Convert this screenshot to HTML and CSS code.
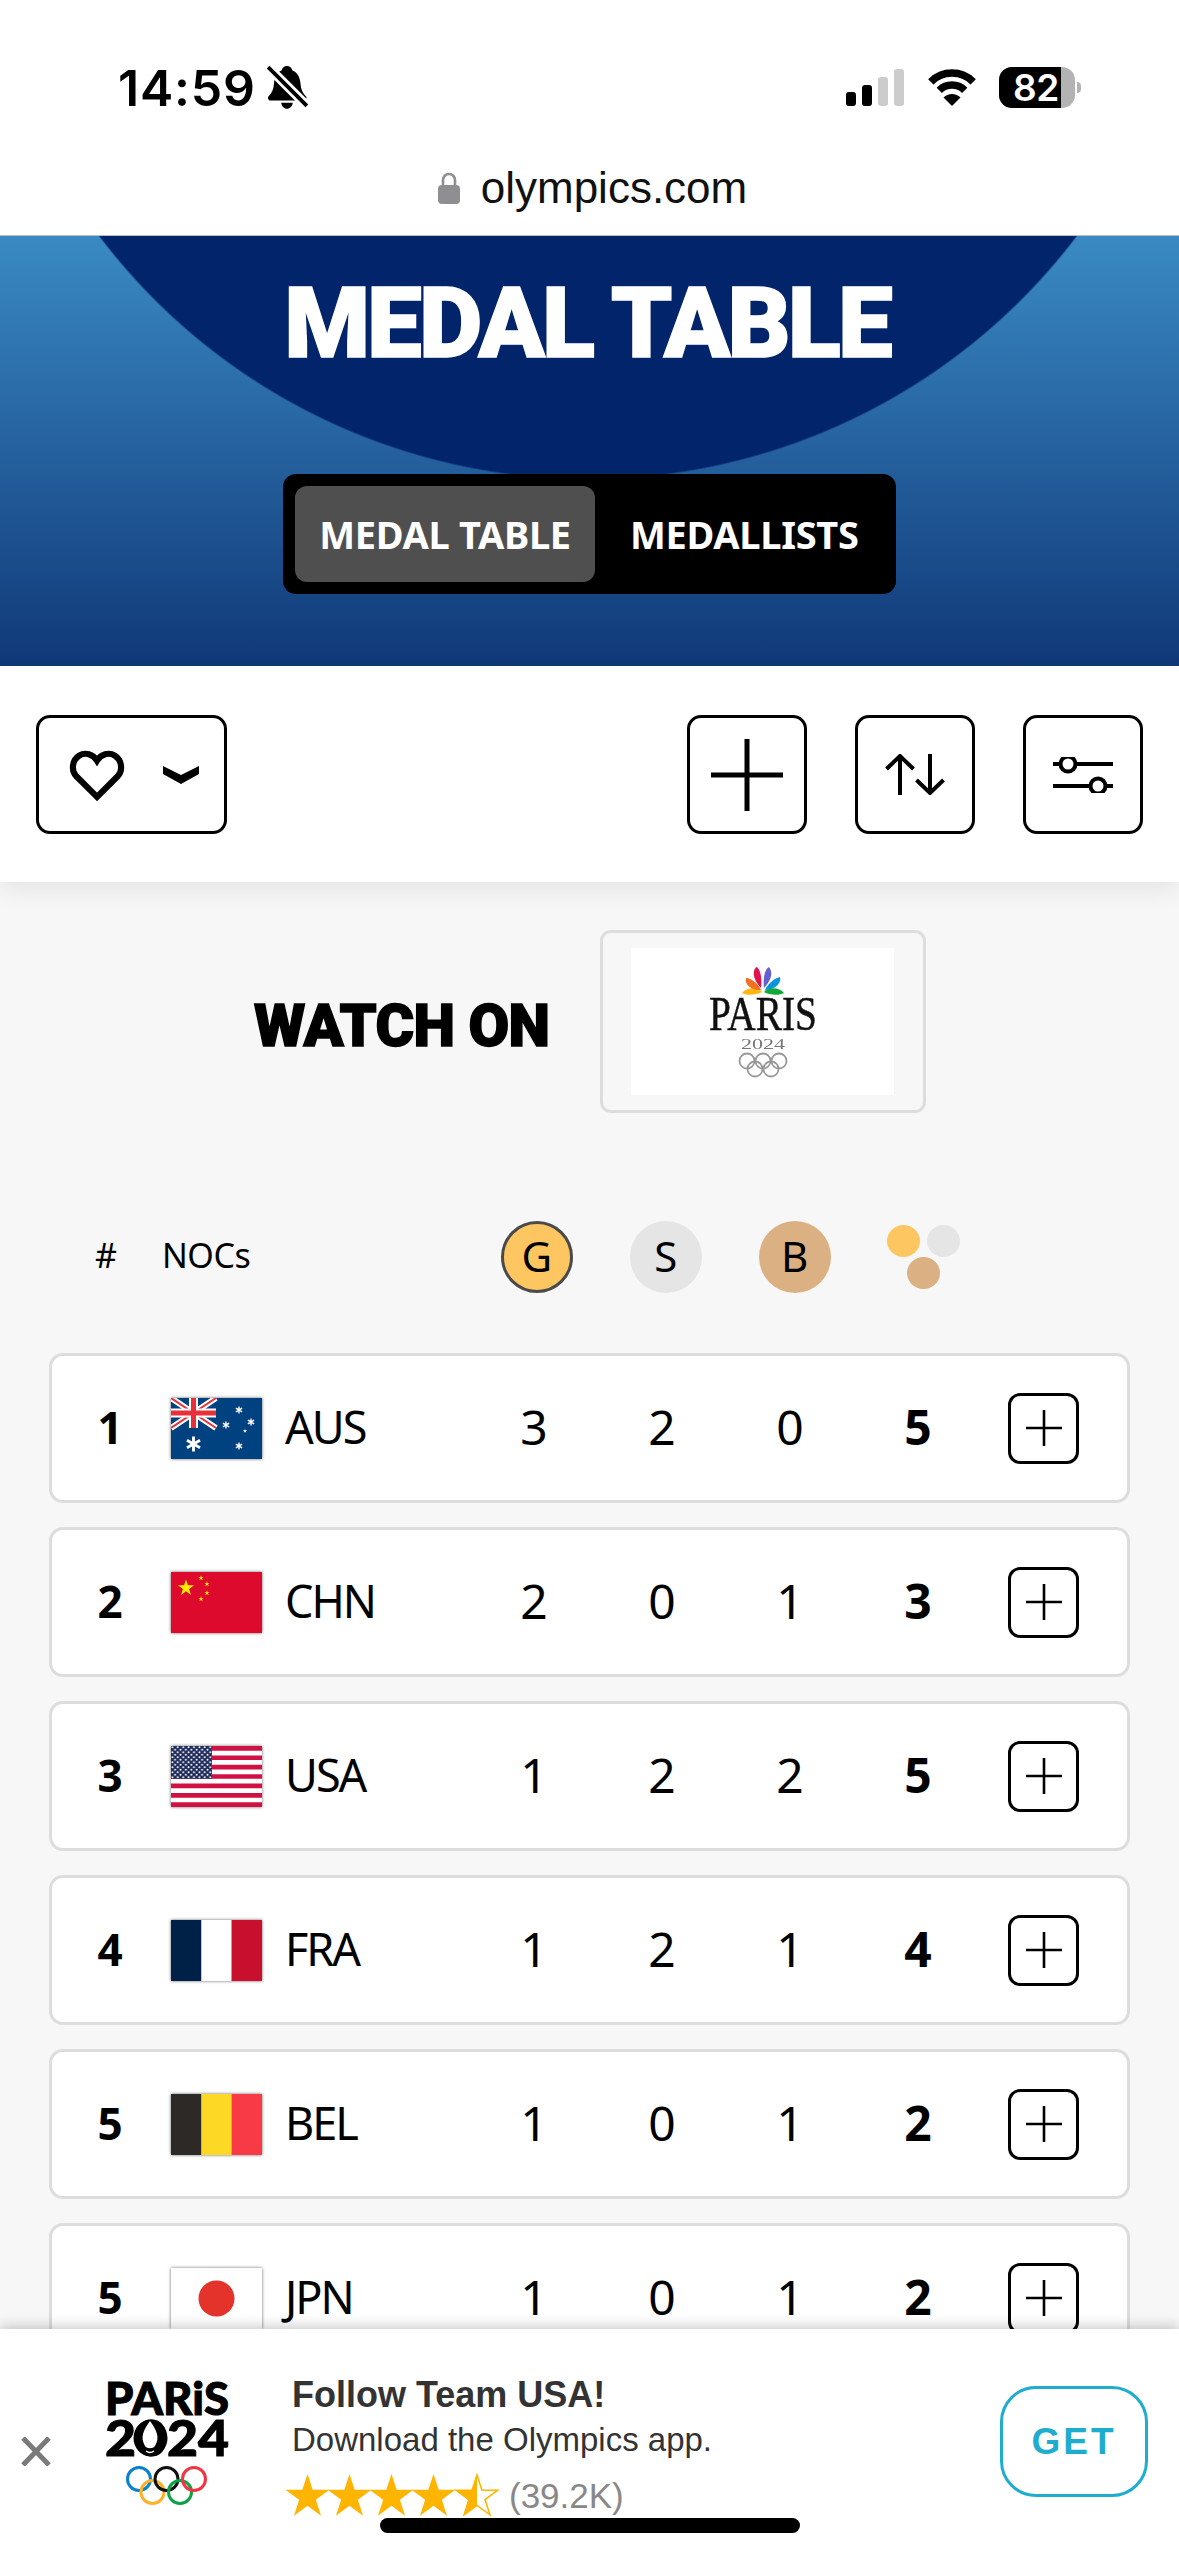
FILE: index.html
```html
<!DOCTYPE html>
<html lang="en">
<head>
    <meta charset="UTF-8">
    <title>Medal Table</title>
    <link rel="stylesheet" href="styles.css">
</head>
<body>
    <svg class="defs" width="0" height="0" aria-hidden="true">
        <defs>
            <polygon id="star" points="0,-1 .225,-.31 .95,-.31 .363,.118 .588,.81 0,.382 -.588,.81 -.363,.118 -.95,-.31 -.225,-.31"/>
            <path id="spark" d="M0-1V1M-.87-.5 .87.5M-.87.5 .87-.5" stroke="#fff" stroke-width=".38" fill="none"/>
            <g id="plus-sign"><path d="M18 0V36M0 18H36" stroke="#000" stroke-width="2.6" fill="none"/></g>
            <pattern id="us-stars" width="5.4" height="5" patternUnits="userSpaceOnUse">
                <circle cx="1.4" cy="1.2" r=".95" fill="#fff"/>
                <circle cx="4.1" cy="3.7" r=".95" fill="#fff"/>
            </pattern>
        </defs>
    </svg>

    <div class="status">
        <div class="status-left">
            <span class="time">14:59</span>
            <svg class="bell" viewBox="0 0 41 43">
                <path d="M20 1c2.6 0 4.6 1.800 5.200 4.300 5 1.800 7.300 6.700 7.800 13.200.4 5.200 2 8.300 5 11.300 1.300 1.300.5 4.200-2 4.200H4.500c-2.500 0-3.300-2.900-2-4.200 3-3 4.600-6.100 5-11.300.5-6.500 2.800-11.400 7.300-13.200C15.400 2.800 17.400 1 20 1z"/>
                <path d="M14.500 36h11c-.4 3.300-2.600 5.800-5.500 5.800s-5.100-2.500-5.500-5.800z"/>
                <path d="M1 1 40 40" stroke="#fff" stroke-width="9"/>
                <path d="M2 2 39 39" stroke="#000" stroke-width="3.600"/>
            </svg>
        </div>
        <div class="status-right">
            <div class="signal">
                <i class="bar bar1"></i><i class="bar bar2"></i><i class="bar bar3"></i><i class="bar bar4"></i>
            </div>
            <svg class="wifi" viewBox="0 0 50 37">
                <path d="M3.800 12.800a30 30 0 0 1 42.400 0M12.300 21.300a18 18 0 0 1 25.400 0" stroke="#000" stroke-width="7.500" fill="none"/>
                <path d="M25 37 16.500 28.500a12 12 0 0 1 17 0z"/>
            </svg>
            <div class="battery"><span class="battery-level">82</span></div>
            <i class="battery-nub"></i>
        </div>
    </div>

    <div class="urlbar">
        <svg class="lock" viewBox="0 0 22 32">
            <path d="M5 14V8a6 6 0 0 1 12 0v6" stroke="#8e8e93" stroke-width="2.600" fill="none"/>
            <rect x="0" y="13" width="22" height="19" rx="4" fill="#8e8e93"/>
        </svg>
        <span class="url">olympics.com</span>
    </div>

    <div class="hero">
        <h1 class="hero-title">MEDAL TABLE</h1>
        <div class="tabs">
            <div class="tab active">MEDAL TABLE</div>
            <div class="tab">MEDALLISTS</div>
        </div>
    </div>

    <div class="toolbar">
        <div class="tool tool-fav">
            <svg class="heart" viewBox="0 0 54 51">
                <path d="M27 47 6.500 26.500C1.500 21 2.500 11 9.500 6.500c6-3.800 13.500-1.500 17.500 5 4-6.500 11.500-8.800 17.500-5 7 4.500 8 14.500 3 20z" stroke="#000" stroke-width="6" fill="none"/>
            </svg>
            <svg class="chevron" viewBox="0 0 36 18"><path d="M0 0 18 9 36 0V8L18 18 0 8z"/></svg>
        </div>
        <div class="tool">
            <svg class="icon-plus" viewBox="0 0 72 72"><path d="M36 0V72M0 36H72" stroke="#000" stroke-width="5" fill="none"/></svg>
        </div>
        <div class="tool">
            <svg class="icon-sort" viewBox="0 0 60 41">
                <path d="M15 41V2M1.500 15 15 2 28.500 15M45 0V39M31.500 26 45 39 58.500 26" stroke="#000" stroke-width="4" fill="none"/>
            </svg>
        </div>
        <div class="tool">
            <svg class="icon-filter" viewBox="0 0 60 36">
                <path d="M0 7H60M0 29H60" stroke="#000" stroke-width="4" fill="none"/>
                <circle cx="15" cy="7" r="7.500" fill="#fff" stroke="#000" stroke-width="4"/>
                <circle cx="45" cy="29" r="7.500" fill="#fff" stroke="#000" stroke-width="4"/>
            </svg>
        </div>
    </div>

    <div class="watch">
        <h2 class="watch-label">WATCH ON</h2>
        <div class="watch-box">
            <svg class="nbc" viewBox="0 0 263 147">
                <g class="nbc-peacock">
                    <path d="M111 45C116 39 126 39 131 44 125 47 116 48 111 45z" fill="#fcb711"/>
                    <path d="M115 30C121 30 128 37 130 42 122 43 113 37 115 30z" fill="#f37021"/>
                    <path d="M125 19C130 20 131 33 130 40 124 34 120 25 125 19z" fill="#e0134b"/>
                    <path d="M138 19C143 25 139 34 133 40 132 33 133 21 138 19z" fill="#6460d0"/>
                    <path d="M149 29C151 36 142 42 134 42 136 37 143 30 149 29z" fill="#0b93dc"/>
                    <path d="M153 45C148 48 138 47 133 44 138 39 148 39 153 45z" fill="#13a83a"/>
                </g>
                <text class="nbc-paris" x="132" y="82" text-anchor="middle" textLength="108" lengthAdjust="spacingAndGlyphs">PARIS</text>
                <text class="nbc-year" x="132" y="101" text-anchor="middle" textLength="44" lengthAdjust="spacingAndGlyphs">2024</text>
                <g class="nbc-rings">
                    <circle cx="116" cy="113" r="7.500"/><circle cx="132" cy="113" r="7.500"/><circle cx="148" cy="113" r="7.500"/>
                    <circle cx="124" cy="121" r="7.500"/><circle cx="140" cy="121" r="7.500"/>
                </g>
            </svg>
        </div>
    </div>

    <div class="table">
        <div class="table-head">
            <span class="head-rank">#</span>
            <span class="head-noc">NOCs</span>
            <div class="head-col"><span class="medal gold">G</span></div>
            <div class="head-col"><span class="medal silver">S</span></div>
            <div class="head-col"><span class="medal bronze">B</span></div>
            <div class="head-col">
                <svg class="medal-total" viewBox="0 0 73 64">
                    <ellipse cx="16.500" cy="16" rx="16.500" ry="16" fill="#fdc661"/>
                    <ellipse cx="56.500" cy="16" rx="16.500" ry="16" fill="#e5e5e5"/>
                    <ellipse cx="36.500" cy="48" rx="16.500" ry="16" fill="#dbb082"/>
                </svg>
            </div>
        </div>

        <div class="row">
            <span class="rank">1</span>
            <svg class="flag" viewBox="0 0 91 61">
                <rect width="91" height="61" fill="#00427f"/>
                <path d="M0 0 45 30M45 0 0 30" stroke="#fff" stroke-width="6"/>
                <path d="M0 0 45 30M45 0 0 30" stroke="#e8303a" stroke-width="2"/>
                <path d="M22.500 0V30M0 15H45" stroke="#fff" stroke-width="9"/>
                <path d="M22.500 0V30M0 15H45" stroke="#e8303a" stroke-width="5"/>
                <use href="#spark" transform="translate(22.500 46) scale(7.500)"/>
                <use href="#spark" transform="translate(68 12) scale(3.600)"/>
                <use href="#spark" transform="translate(55 27) scale(3.600)"/>
                <use href="#spark" transform="translate(80 24) scale(3.600)"/>
                <use href="#star" fill="#fff" transform="translate(74 33) scale(2.200)"/>
                <use href="#spark" transform="translate(68 48) scale(3.600)"/>
            </svg>
            <span class="noc">AUS</span>
            <span class="num">3</span><span class="num">2</span><span class="num">0</span><span class="num total">5</span>
            <div class="expand"><svg viewBox="0 0 36 36"><use href="#plus-sign"/></svg></div>
        </div>

        <div class="row">
            <span class="rank">2</span>
            <svg class="flag" viewBox="0 0 91 61">
                <rect width="91" height="61" fill="#de0a2e"/>
                <use href="#star" fill="#ffec00" transform="translate(15 16) scale(8.500)"/>
                <use href="#star" fill="#ffec00" transform="translate(30 6) scale(2.800)"/>
                <use href="#star" fill="#ffec00" transform="translate(36 12) scale(2.800)"/>
                <use href="#star" fill="#ffec00" transform="translate(36 21) scale(2.800)"/>
                <use href="#star" fill="#ffec00" transform="translate(30 27) scale(2.800)"/>
            </svg>
            <span class="noc">CHN</span>
            <span class="num">2</span><span class="num">0</span><span class="num">1</span><span class="num total">3</span>
            <div class="expand"><svg viewBox="0 0 36 36"><use href="#plus-sign"/></svg></div>
        </div>

        <div class="row">
            <span class="rank">3</span>
            <svg class="flag" viewBox="0 0 91 61">
                <rect width="91" height="61" fill="#fff"/>
                <path d="M0 2.350H91M0 11.730H91M0 21.100H91M0 30.500H91M0 39.900H91M0 49.300H91M0 58.650H91" stroke="#cf1144" stroke-width="4.700"/>
                <rect width="41" height="32.800" fill="#1f2c5c"/>
                <rect width="41" height="32.800" fill="url(#us-stars)"/>
            </svg>
            <span class="noc">USA</span>
            <span class="num">1</span><span class="num">2</span><span class="num">2</span><span class="num total">5</span>
            <div class="expand"><svg viewBox="0 0 36 36"><use href="#plus-sign"/></svg></div>
        </div>

        <div class="row">
            <span class="rank">4</span>
            <svg class="flag" viewBox="0 0 91 61">
                <rect width="30.500" height="61" fill="#002147"/>
                <rect x="30.500" width="30" height="61" fill="#fff"/>
                <rect x="60.500" width="30.500" height="61" fill="#c8102e"/>
            </svg>
            <span class="noc">FRA</span>
            <span class="num">1</span><span class="num">2</span><span class="num">1</span><span class="num total">4</span>
            <div class="expand"><svg viewBox="0 0 36 36"><use href="#plus-sign"/></svg></div>
        </div>

        <div class="row">
            <span class="rank">5</span>
            <svg class="flag" viewBox="0 0 91 61">
                <rect width="30.500" height="61" fill="#2d2926"/>
                <rect x="30.500" width="30" height="61" fill="#fdd825"/>
                <rect x="60.500" width="30.500" height="61" fill="#f73a45"/>
            </svg>
            <span class="noc">BEL</span>
            <span class="num">1</span><span class="num">0</span><span class="num">1</span><span class="num total">2</span>
            <div class="expand"><svg viewBox="0 0 36 36"><use href="#plus-sign"/></svg></div>
        </div>

        <div class="row">
            <span class="rank">5</span>
            <svg class="flag" viewBox="0 0 91 61">
                <rect width="91" height="61" fill="#fff"/>
                <circle cx="45.500" cy="30.500" r="18" fill="#e4332a"/>
            </svg>
            <span class="noc">JPN</span>
            <span class="num">1</span><span class="num">0</span><span class="num">1</span><span class="num total">2</span>
            <div class="expand"><svg viewBox="0 0 36 36"><use href="#plus-sign"/></svg></div>
        </div>
    </div>

    <!-- app banner sits over the bottom of the table -->
    <div class="banner">
        <svg class="close" viewBox="0 0 30 29"><path d="M2 1 28 28M28 1 2 28" stroke="#7a7a7a" stroke-width="5" fill="none"/></svg>
        <svg class="app-logo" viewBox="0 0 124 124">
            <text class="app-word" x="0" y="34" textLength="124" lengthAdjust="spacingAndGlyphs">PARiS</text>
            <text class="app-word app-year" x="0" y="75" textLength="124" lengthAdjust="spacingAndGlyphs">2024</text>
            <!-- the zero holds the flame -->
            <ellipse cx="45.500" cy="57" rx="17" ry="18.500"/>
            <path d="M45 40C52 50 55 56 50 65 48 68 42 68 40 65 35 56 38 50 45 40z" fill="#fff"/>
            <path d="M41 70Q45 73 49 70" stroke="#fff" stroke-width="1.500" fill="none"/>
            <g class="rings">
                <circle cx="34" cy="98" r="11.500" stroke="#0a81cf"/>
                <circle cx="47.500" cy="111" r="11.500" stroke="#fbb12a"/>
                <circle cx="61.500" cy="98" r="11.500" stroke="#111"/>
                <circle cx="75" cy="111" r="11.500" stroke="#0da24a"/>
                <circle cx="89" cy="98" r="11.500" stroke="#f0353f"/>
            </g>
        </svg>
        <div class="app-text">
            <div class="app-title">Follow Team USA!</div>
            <div class="app-sub">Download the Olympics app.</div>
            <div class="app-rating">
                <svg class="stars" viewBox="0 0 214 45">
                    <use href="#star" fill="#ffb400" transform="translate(21.500 24) scale(23)"/>
                    <use href="#star" fill="#ffb400" transform="translate(63.500 24) scale(23)"/>
                    <use href="#star" fill="#ffb400" transform="translate(105.500 24) scale(23)"/>
                    <use href="#star" fill="#ffb400" transform="translate(147.500 24) scale(23)"/>
                    <use href="#star" fill="#fff" stroke="#ffb400" stroke-width=".07" transform="translate(191 24) scale(22)"/>
                    <path d="M191 2 186 17H170L182 27 178 42 191 33z" fill="#ffb400"/>
                </svg>
                <span class="app-count">(39.2K)</span>
            </div>
        </div>
        <div class="get">GET</div>
    </div>
    <div class="home-bar"></div>
</body>

</html>
```

FILE: styles.css
```css
* { box-sizing: border-box; }
html, body { margin: 0; padding: 0; }
body {
    position: relative;
    width: 1179px;
    height: 2556px;
    overflow: hidden;
    background: #f7f7f7;
    font-family: "Noto Sans", sans-serif;
    color: #000;
}
svg { display: block; }
.defs { position: absolute; }

/* phone status bar */
.status {
    display: flex;
    justify-content: space-between;
    align-items: center;
    height: 145px;
    padding: 30px 98px 0 118px;
    background: #fff;
}
.status-left { display: flex; align-items: center; gap: 10px; }
.time { font-family: Inter, sans-serif; font-size: 50px; font-weight: 600; line-height: 50px; letter-spacing: .8px; }
.bell { width: 43px; height: 45px; }
.status-right { display: flex; align-items: center; }
.signal { display: flex; align-items: flex-end; gap: 6px; height: 37px; margin-right: 23px; }
.bar { display: block; width: 10px; border-radius: 3px; background: #000; }
.bar1 { height: 14px; }
.bar2 { height: 21px; }
.bar3 { height: 29px; background: #ccc; }
.bar4 { height: 37px; background: #ccc; }
.wifi { width: 50px; height: 37px; margin-right: 22px; }
.battery {
    display: flex;
    width: 76px;
    height: 41px;
    border-radius: 13px;
    background: #b3b3b3;
}
.battery-level {
    width: 62px;
    padding-left: 14px;
    border-radius: 13px 0 0 13px;
    background: #000;
    color: #fff;
    font-family: Inter, sans-serif;
    font-size: 37px;
    font-weight: 600;
    line-height: 41px;
    letter-spacing: -.5px;
}
.battery-nub {
    display: block;
    width: 4px;
    height: 11px;
    margin-left: 2px;
    border-radius: 0 4px 4px 0;
    background: #b3b3b3;
}

.urlbar {
    display: flex;
    justify-content: center;
    align-items: center;
    gap: 21px;
    height: 91px;
    padding: 0 0 4px 6px;
    background: #fff;
    border-bottom: 1px solid #bdbdbd;
}
.lock { width: 22px; height: 32px; }
.url { font-family: "Liberation Sans", sans-serif; font-size: 44px; line-height: 50px; color: #111; }

/* hero */
.hero {
    display: flex;
    flex-direction: column;
    align-items: center;
    height: 430px;
    padding-top: 52px;
    background:
        radial-gradient(circle 614px at 588px -370px, #02246b 99.7%, transparent 100%),
        linear-gradient(#3a8ac4, #103878);
}
.hero-title {
    margin: 0 5px 0 0;
    font-family: Roboto, sans-serif;
    font-size: 98px;
    font-weight: 900;
    line-height: 71px;
    letter-spacing: -3px;
    -webkit-text-stroke: 1.500px #fff;
    color: #fff;
}
.tabs {
    display: flex;
    width: 613px;
    height: 120px;
    margin-top: 115px;
    padding: 12px;
    border-radius: 13px;
    background: #000;
}
.tab {
    padding-left: 35px;
    color: #fff;
    font-size: 38px;
    font-weight: 700;
    line-height: 96px;
    letter-spacing: -.3px;
    white-space: nowrap;
}
.tab.active {
    width: 300px;
    padding: 0;
    border-radius: 12px;
    background: #4f4f4f;
    text-align: center;
}

/* toolbar */
.toolbar {
    position: relative;
    display: flex;
    gap: 48px;
    height: 216px;
    padding: 49px 36px 0;
    background: #fff;
    box-shadow: 0 8px 24px rgba(0, 0, 0, .08);
}
.tool {
    display: flex;
    justify-content: center;
    align-items: center;
    width: 120px;
    height: 119px;
    border: 3px solid #000;
    border-radius: 14px;
    background: #fff;
}
.tool-fav { width: 191px; margin-right: auto; gap: 38px; padding-left: 4px; }
.heart { width: 56px; height: 52px; }
.chevron { width: 36px; height: 18px; }
.icon-plus { width: 72px; height: 72px; }
.icon-sort { width: 60px; height: 41px; }
.icon-filter { width: 60px; height: 36px; }

/* watch on */
.watch { display: flex; align-items: center; gap: 51px; margin-top: 48px; padding-left: 254px; }
.watch-label {
    margin: 9px 0 0;
    width: 295px;
    font-family: Roboto, sans-serif;
    font-size: 59px;
    font-weight: 900;
    line-height: 42px;
    letter-spacing: -.6px;
    -webkit-text-stroke: 1.500px #000;
    white-space: nowrap;
}
.watch-box {
    width: 326px;
    height: 183px;
    padding: 15px 28px;
    border: 3px solid #ddd;
    border-radius: 11px;
}
.nbc { width: 263px; height: 147px; background: #fff; }
.nbc-peacock, .nbc-rings, .nbc-paris, .nbc-year { filter: blur(.7px); }
.nbc-paris { font-family: "Liberation Serif", serif; font-size: 48px; fill: #111; stroke: #111; stroke-width: .5px; }
.nbc-year { font-family: "Liberation Serif", serif; font-size: 15px; fill: #777; }
.nbc-rings { fill: none; stroke: #999; stroke-width: 1.800; }

/* table */
.table { margin-top: 108px; padding: 0 49px; }
.table-head { display: flex; align-items: center; height: 72px; margin-bottom: 60px; padding-left: 46px; font-size: 34px; letter-spacing: -.5px; }
.head-rank, .head-noc { padding-bottom: 5px; }
.head-rank { width: 67px; }
.head-noc { width: 310px; }
.head-col { display: flex; justify-content: center; width: 129px; }
.medal {
    width: 72px;
    height: 72px;
    border-radius: 50%;
    font-size: 42px;
    line-height: 70px;
    text-align: center;
}
.gold { background: #fdc661; border: 3px solid #4a4a4a; line-height: 64px; }
.silver { background: #e5e5e5; }
.bronze { background: #dbb082; }
.medal-total { width: 73px; height: 64px; }

.row {
    display: flex;
    align-items: center;
    height: 150px;
    margin-bottom: 24px;
    padding-left: 24px;
    border: 3px solid #ddd;
    border-radius: 14px;
    background: #fff;
}
.rank, .noc, .num { padding-bottom: 3px; }
.rank { width: 68px; margin-right: 27px; font-size: 44px; font-weight: 700; text-align: center; }
.flag { width: 91px; height: 61px; margin-right: 23px; box-shadow: 0 0 3px rgba(0, 0, 0, .6); }
.noc { width: 185px; font-size: 45px; letter-spacing: -2px; }
.num { width: 128px; font-size: 48px; text-align: center; }
.total { font-weight: 700; }
.expand {
    display: flex;
    justify-content: center;
    align-items: center;
    width: 71px;
    height: 71px;
    margin-left: 26px;
    border: 3px solid #000;
    border-radius: 12px;
}
.expand svg { width: 36px; height: 36px; }

/* app banner */
.banner {
    position: absolute;
    left: 0;
    right: 0;
    bottom: 0;
    display: flex;
    align-items: flex-start;
    height: 227px;
    padding-right: 31px;
    background: #fff;
    box-shadow: 0 -3px 12px rgba(0, 0, 0, .2);
    font-family: "Liberation Sans", sans-serif;
}
.close { width: 30px; height: 29px; margin: 108px 0 0 21px; }
.app-logo { width: 124px; height: 124px; margin: 52px 0 0 54px; overflow: visible; }
.app-word { font-family: Lato, sans-serif; font-size: 46px; font-weight: 900; stroke: #000; stroke-width: 1px; }
.app-year { font-size: 49px; }
.rings circle { fill: none; stroke-width: 3; }
.app-text { margin: 44px 0 0 63px; }
.app-title { font-size: 36px; font-weight: 700; line-height: 44px; color: #333; }
.app-sub { margin-top: 1px; font-size: 33px; line-height: 44px; color: #333; }
.app-rating { display: flex; align-items: center; gap: 9px; margin: 11px 0 0 -6px; }
.stars { width: 214px; height: 45px; }
.app-count { font-size: 35px; line-height: 45px; color: #888; }
.get {
    width: 148px;
    height: 111px;
    margin: 57px 0 0 auto;
    border: 3px solid #1eaccf;
    border-radius: 36px;
    color: #1eaccf;
    font-size: 37px;
    font-weight: 700;
    line-height: 105px;
    letter-spacing: 3px;
    text-align: center;
}
.home-bar {
    position: absolute;
    left: 380px;
    top: 2518px;
    width: 420px;
    height: 15px;
    border-radius: 8px;
    background: #000;
}
```
